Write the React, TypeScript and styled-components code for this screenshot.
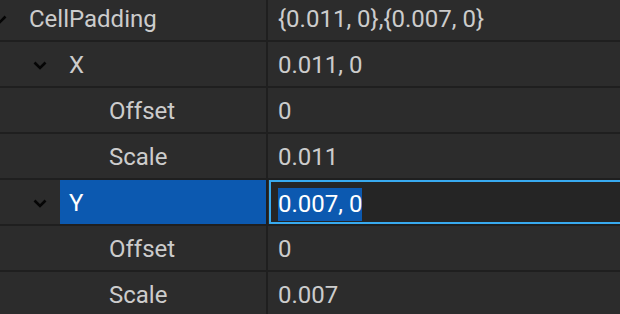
import React from 'react'
import styled, { createGlobalStyle } from 'styled-components'

const GlobalStyle = createGlobalStyle`
  html, body {
    margin: 0;
    padding: 0;
    background: #2c2c2c;
    overflow: hidden;
  }
  body {
    font-family: Roboto, "Liberation Sans", sans-serif;
  }
`

const Table = styled.div`
  display: grid;
  grid-template-columns: 266px 1fr;
  grid-auto-rows: 44px;
  gap: 2px;
  margin-top: -4px;
  width: 620px;
  background: #1f1f1f;
`

const NameCell = styled.div`
  display: flex;
  align-items: stretch;
  background: #2c2c2c;
  min-width: 0;
`

const Toggle = styled.div<{ depth: number }>`
  flex: none;
  width: 24px;
  margin-left: ${(p) => p.depth * 40 - 12}px;
  display: flex;
  align-items: center;
  justify-content: center;
  padding-top: 3px;
`

const Label = styled.div<{ selected?: boolean }>`
  flex: 1;
  display: flex;
  align-items: center;
  margin-left: 8px;
  padding: 2px 0 0 9px;
  font-size: 24px;
  color: ${(p) => (p.selected ? '#ffffff' : '#cccccc')};
  background: ${(p) => (p.selected ? '#0c59b0' : 'transparent')};
  white-space: nowrap;
`

const ValueCell = styled.div`
  display: flex;
  align-items: center;
  padding: 2px 0 0 10px;
  background: #2c2c2c;
  font-size: 24px;
  color: #cccccc;
  white-space: nowrap;
`

const EditCell = styled.div`
  display: flex;
  align-items: stretch;
  background: #2c2c2c;
  padding-left: 1px;
`

const Input = styled.div`
  flex: 1;
  display: flex;
  align-items: center;
  padding: 4px 0 0 7px;
  border: 2px solid #38aaef;
  border-right: none;
  background: #252525;
  font-size: 24px;
  color: #ffffff;
  white-space: nowrap;
`

const Selection = styled.span`
  display: inline-block;
  height: 33px;
  line-height: 33px;
  background: #0c59b0;
`

const Chevron = () => (
  <svg width="14" height="9" viewBox="0 0 14 9">
    <polyline points="1.5,1.5 7,7 12.5,1.5" fill="none" stroke="#050505" strokeWidth="2.6" />
  </svg>
)

type Row = {
  name: string
  value: string
  depth: number
  open?: boolean
  selected?: boolean
}

const rows: Row[] = [
  { name: 'CellPadding', value: '{0.011, 0},{0.007, 0}', depth: 0, open: true },
  { name: 'X', value: '0.011, 0', depth: 1, open: true },
  { name: 'Offset', value: '0', depth: 2 },
  { name: 'Scale', value: '0.011', depth: 2 },
  { name: 'Y', value: '0.007, 0', depth: 1, open: true, selected: true },
  { name: 'Offset', value: '0', depth: 2 },
  { name: 'Scale', value: '0.007', depth: 2 },
]

export default function App() {
  return (
    <>
      <GlobalStyle />
      <Table>
        {rows.map((r, i) => (
          <React.Fragment key={i}>
            <NameCell>
              <Toggle depth={r.depth}>{r.open && <Chevron />}</Toggle>
              <Label selected={r.selected}>{r.name}</Label>
            </NameCell>
            {r.selected ? (
              <EditCell>
                <Input>
                  <Selection>{r.value}</Selection>
                </Input>
              </EditCell>
            ) : (
              <ValueCell>{r.value}</ValueCell>
            )}
          </React.Fragment>
        ))}
      </Table>
    </>
  )
}
